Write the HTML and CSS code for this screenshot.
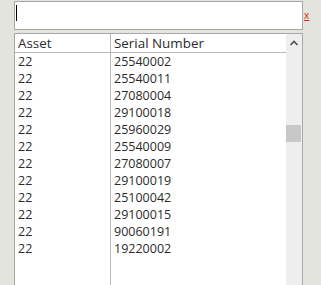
FILE: index.html
```
<!DOCTYPE html>
<html lang="en">
<head>
  <meta charset="UTF-8" />
  <title>Asset Lookup</title>
  <link rel="stylesheet" href="styles.css">
</head>
<body>

  <!-- search box with clear link -->
  <div class="search-row">
    <div class="search-box"><span class="caret"></span></div>
    <a class="clear-link" href="#">x</a>
  </div>

  <div class="list-box">
    <div class="list">
      <div class="row head">
        <div class="cell">Asset</div>
        <div class="cell">Serial Number</div>
      </div>
      <div class="row"><div class="cell">22</div><div class="cell">25540002</div></div>
      <div class="row"><div class="cell">22</div><div class="cell">25540011</div></div>
      <div class="row"><div class="cell">22</div><div class="cell">27080004</div></div>
      <div class="row"><div class="cell">22</div><div class="cell">29100018</div></div>
      <div class="row"><div class="cell">22</div><div class="cell">25960029</div></div>
      <div class="row"><div class="cell">22</div><div class="cell">25540009</div></div>
      <div class="row"><div class="cell">22</div><div class="cell">27080007</div></div>
      <div class="row"><div class="cell">22</div><div class="cell">29100019</div></div>
      <div class="row"><div class="cell">22</div><div class="cell">25100042</div></div>
      <div class="row"><div class="cell">22</div><div class="cell">29100015</div></div>
      <div class="row"><div class="cell">22</div><div class="cell">90060191</div></div>
      <div class="row"><div class="cell">22</div><div class="cell">19220002</div></div>
      <div class="row"><div class="cell"></div><div class="cell"></div></div>
      <div class="row"><div class="cell"></div><div class="cell"></div></div>
    </div>
    <div class="scrollbar">
      <div class="arrow">
        <svg width="16" height="16" viewBox="0 0 16 16">
          <path d="M4.5 10 L8 6.5 L11.5 10" fill="none" stroke="#505050" stroke-width="1.6"/>
        </svg>
      </div>
      <div class="thumb"></div>
    </div>
  </div>

</body>
</html>
```

FILE: styles.css
```
* {
  box-sizing: border-box;
}
body {
  margin: 0;
  background: #e4e4df;
  font-family: 'Open Sans', sans-serif;
  font-size: 12.5px;
  color: #2b2b2b;
  height: 285px;
  overflow: hidden;
}
.search-row {
  display: flex;
  align-items: flex-start;
  padding: 1px 0 0 14px;
}
.search-box {
  width: 289px;
  height: 29px;
  background: #fff;
  border: 1px solid #a8a8a8;
  padding: 3px 0 0 1px;
}
.caret {
  display: block;
  width: 1px;
  height: 16px;
  background: #000;
}
.clear-link {
  color: #e02020;
  font-size: 10px;
  line-height: 10px;
  margin: 9px 0 0 1px;
  text-decoration: underline;
}
.list-box {
  display: flex;
  width: 289px;
  height: 260px;
  margin: 3px 0 0 14px;
  background: #fff;
  border: 1px solid #a8a8a8;
  border-bottom: none;
}
.list {
  flex: 1;
}
.row {
  display: flex;
  height: 17px;
  line-height: 17px;
}
.row.head {
  height: 19px;
  line-height: 18px;
  font-size: 13.4px;
  border-bottom: 1px solid #b8b8b8;
}
.cell {
  padding-left: 3px;
  white-space: nowrap;
}
.cell:first-child {
  width: 96px;
  flex-shrink: 0;
  border-right: 1px solid #b8b8b8;
}
.row.head .cell:first-child {
  height: 18px;
}
.list .row:not(.head) .cell:first-child {
  height: 17px;
}
.scrollbar {
  width: 16px;
  background: #eeeeee;
  flex-shrink: 0;
}
.arrow {
  height: 16px;
  margin-top: 1px;
}
.arrow svg {
  display: block;
}
.thumb {
  width: 15px;
  height: 17px;
  margin-top: 74px;
  background: #c8c8c8;
}
```
